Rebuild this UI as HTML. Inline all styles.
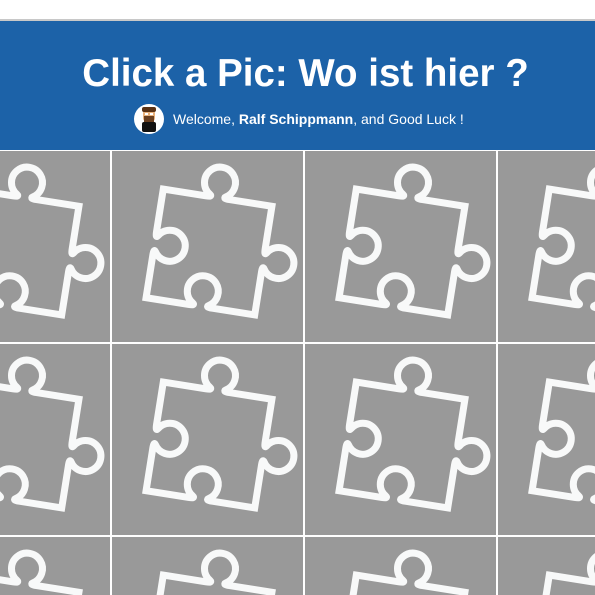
<!DOCTYPE html>
<html><head><style>
html,body{margin:0;padding:0;width:595px;height:595px;overflow:hidden;background:#fff;font-family:"Liberation Sans",sans-serif}
#top{position:absolute;left:0;top:0;width:595px;height:19px;background:#fff}
#line{position:absolute;left:0;top:19px;width:595px;height:2px;background:#c8c8c8}
#hdr{position:absolute;left:0;top:21px;width:595px;height:129px;background:#1c62a8;color:#fff}
h1{position:absolute;left:0;width:595px;top:33px;margin:0;text-align:center;font-size:38.5px;font-weight:bold;line-height:40px;transform:translateX(8px)}
#w{position:absolute;left:173px;top:89px;font-size:14px;line-height:18px;white-space:nowrap}
#av{position:absolute;left:134px;top:83px;width:30px;height:30px;border-radius:50%;background:#fff;overflow:hidden}
#grid{position:absolute;left:0;top:150px}
</style></head><body>
<div id="top"></div><div id="line"></div>
<div id="hdr">
<h1>Click a Pic: Wo ist hier ?</h1>
<div id="av"><svg width="30" height="30"><rect x="9" y="5" width="12" height="13" rx="4" fill="#e8b07a"/><rect x="8" y="3" width="14" height="5" rx="2" fill="#5a3214"/><rect x="10" y="12" width="10" height="6" fill="#6b4020"/><rect x="11" y="9" width="3" height="2" fill="#fff"/><rect x="16" y="9" width="3" height="2" fill="#fff"/><rect x="8" y="18" width="14" height="10" rx="2" fill="#111"/></svg></div>
<div id="w">Welcome, <b>Ralf Schippmann</b>, and Good Luck !</div>
</div>
<svg id="grid" width="595" height="445">
<defs><pattern id="p" x="112" y="1" width="193" height="193" patternUnits="userSpaceOnUse">
<rect width="193" height="193" fill="#fff"/>
<rect width="191" height="191" fill="#999"/>
<g transform="translate(97,101) rotate(9)" fill="none" stroke="#f8f9f9" stroke-width="7">
<path d="M-55 -55 L-12 -55 Q-5 -55 -8 -57 A15.5 15.5 0 1 1 8 -57 Q5 -55 12 -55 L55 -55 L55 -12 Q55 -5 57 -8 A15.5 15.5 0 1 1 57 8 Q55 5 55 12 L55 55 L12 55 Q5 55 8 53 A15.5 15.5 0 1 0 -8 53 Q-5 55 -12 55 L-55 55 L-55 12 Q-55 5 -53 8 A15.5 15.5 0 1 0 -53 -8 Q-55 -5 -55 -12 Z"/>
</g>
</pattern></defs>
<rect width="595" height="445" fill="url(#p)"/>
</svg>
</body></html>
